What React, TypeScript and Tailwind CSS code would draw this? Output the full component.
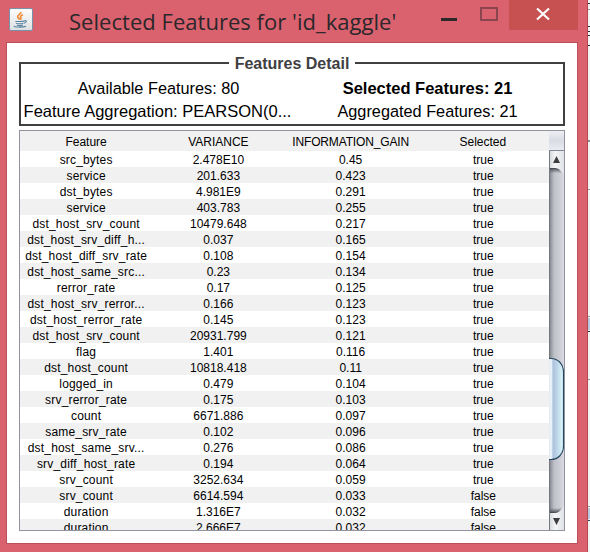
import React from "react";

type Row = [string, string, string, string];

const rows: Row[] = [
  ["src_bytes", "2.478E10", "0.45", "true"],
  ["service", "201.633", "0.423", "true"],
  ["dst_bytes", "4.981E9", "0.291", "true"],
  ["service", "403.783", "0.255", "true"],
  ["dst_host_srv_count", "10479.648", "0.217", "true"],
  ["dst_host_srv_diff_h...", "0.037", "0.165", "true"],
  ["dst_host_diff_srv_rate", "0.108", "0.154", "true"],
  ["dst_host_same_src...", "0.23", "0.134", "true"],
  ["rerror_rate", "0.17", "0.125", "true"],
  ["dst_host_srv_rerror...", "0.166", "0.123", "true"],
  ["dst_host_rerror_rate", "0.145", "0.123", "true"],
  ["dst_host_srv_count", "20931.799", "0.121", "true"],
  ["flag", "1.401", "0.116", "true"],
  ["dst_host_count", "10818.418", "0.11", "true"],
  ["logged_in", "0.479", "0.104", "true"],
  ["srv_rerror_rate", "0.175", "0.103", "true"],
  ["count", "6671.886", "0.097", "true"],
  ["same_srv_rate", "0.102", "0.096", "true"],
  ["dst_host_same_srv...", "0.276", "0.086", "true"],
  ["srv_diff_host_rate", "0.194", "0.064", "true"],
  ["srv_count", "3252.634", "0.059", "true"],
  ["srv_count", "6614.594", "0.033", "false"],
  ["duration", "1.316E7", "0.032", "false"],
  ["duration", "2.666E7", "0.032", "false"],
];

function JavaIcon() {
  return (
    <svg className="block h-6 w-6" viewBox="0 0 24 24" fill="none">
      <defs>
        <linearGradient id="tile" x1="0" y1="0" x2="0" y2="1">
          <stop offset="0" stopColor="#fdfdfd" />
          <stop offset="1" stopColor="#dde0e2" />
        </linearGradient>
      </defs>
      <rect x="0.5" y="0.5" width="23" height="22" rx="1.5" fill="url(#tile)" stroke="#7892a9" />
      <path d="M12 4c.5 2-4 3-3.300 5.200.3 1 1.600 1.500 1.900 2.500M14 6.800c-2 .8-3 1.600-2.300 2.700.5.9.5 1.500-.3 2.100" stroke="#ef8b35" strokeWidth="1.700" />
      <path d="M6.500 13c0 .8 7.500.7 9 0M15.500 12.700c2.500-.5 2.500 1.800-.5 2.500M7.200 15c0 1 5.500 1 7.200.2M7.800 17c.8.900 4.500.8 6 0M5.500 18c-2.500 1.300 9 1.500 11.500.2" stroke="#56819f" strokeWidth="1.100" />
    </svg>
  );
}

function ScrollBar() {
  return (
    <svg className="block h-[380px] w-[15px]" viewBox="0 0 15 380">
      <defs>
        <linearGradient id="track">
          <stop offset="0" stopColor="#777980" />
          <stop offset="0.14" stopColor="#999ba3" />
          <stop offset="0.35" stopColor="#bfc1c8" />
          <stop offset="0.7" stopColor="#cccdd5" />
          <stop offset="1" stopColor="#d8d9e1" />
        </linearGradient>
        <linearGradient id="button">
          <stop offset="0" stopColor="#d1d3d6" />
          <stop offset="0.4" stopColor="#f4f5f5" />
          <stop offset="1" stopColor="#dfe2e7" />
        </linearGradient>
        <linearGradient id="thumb">
          <stop offset="0" stopColor="#e1ebf5" />
          <stop offset="0.16" stopColor="#eef4fa" />
          <stop offset="0.28" stopColor="#adc3dc" />
          <stop offset="0.5" stopColor="#b9d0e5" />
          <stop offset="1" stopColor="#e0fbff" />
        </linearGradient>
        <linearGradient id="shadeTop" x1="0" y1="0" x2="0" y2="1">
          <stop offset="0" stopColor="#303238" stopOpacity="0.9" />
          <stop offset="1" stopColor="#777980" stopOpacity="0" />
        </linearGradient>
        <linearGradient id="shadeBottom" x1="0" y1="1" x2="0" y2="0">
          <stop offset="0" stopColor="#303238" stopOpacity="0.9" />
          <stop offset="1" stopColor="#777980" stopOpacity="0" />
        </linearGradient>
      </defs>
      <rect width="15" height="380" fill="url(#track)" />
      <path d="M0 17H7C10 17 12 20 13 23C9 21 4 21 0 23Z" fill="url(#shadeTop)" />
      <path d="M0 0H15V26C14 21 11 17 6 17H0Z" fill="url(#button)" />
      <path d="M0 362H7C10 362 12 359 13 356C9 358 4 358 0 356Z" fill="url(#shadeBottom)" />
      <path d="M0 380H15V353C14 358 11 362 6 362H0Z" fill="url(#button)" />
      <path d="M7.500 5L11 12H4Z M4 367H11L7.500 374Z" fill="#3b3e40" />
      <path d="M0 207.500H2C9 207.500 14.500 213 14.500 221V295C14.500 303 9 308.500 2 308.500H0Z" fill="url(#thumb)" />
      <path d="M0 207.500H2C9 207.500 14.500 213 14.500 221V295C14.500 303 9 308.500 2 308.500H0" fill="none" stroke="#294960" strokeWidth="1.200" />
      <path d="M.5 0V207M.5 309V380" stroke="#777980" />
    </svg>
  );
}

function TitleBar() {
  return (
    <header className="flex h-[42px] items-start">
      <div className="ml-[9px] mt-2">
        <JavaIcon />
      </div>
      <h1 className="ml-9 mt-[5px] h-8 w-[337px] whitespace-nowrap font-['Open_Sans',sans-serif] text-[22px] leading-8 tracking-[0.03px] text-[#2b272a]">
        Selected Features for 'id_kaggle'
      </h1>
      <svg className="ml-[35px] h-[30px] w-[68px]" viewBox="0 0 68 30" fill="none">
        <rect y="18" width="16" height="3" fill="#2b282a" />
        <rect x="40" y="8" width="16" height="12" stroke="#8b454e" strokeWidth="2" />
      </svg>
      <div className="h-[30px] w-[69px] bg-[#c75050]">
        <svg className="h-[30px] w-[69px]" viewBox="0 0 69 30">
          <path d="M28 8.500L40 19.500M40 8.500L28 19.500" stroke="white" strokeWidth="2.200" />
        </svg>
      </div>
    </header>
  );
}

export default function App() {
  return (
    <div className="flex h-[552px] w-[590px] overflow-hidden bg-[#f4f4f5] font-['Liberation_Sans',Arial,sans-serif] text-black">
      <div className="h-[552px] w-[588px] shrink-0 border-r border-[#b44853] bg-[#da626f]">
        <TitleBar />
        <main className="ml-1.5 h-[502px] w-[572px] border border-[#bd4f5a] bg-white px-3 pt-[19px]">
          <section className="flex h-16 w-[546px] flex-col border-2 border-[#404042]">
            <h2 className="-mt-[10px] h-[19px] w-[126px] shrink-0 self-center bg-white text-center text-base font-bold leading-[19px] text-[#404042]">
              Features Detail
            </h2>
            <div className="mt-1 grid grid-cols-2 whitespace-nowrap text-center text-[16.300px] leading-[23px]">
              <span className="pl-1">Available Features: 80</span>
              <b className="text-[16.500px] leading-[23px]">Selected Features: 21</b>
              <span className="pl-0.5 text-[16.500px] leading-[23px]">Feature Aggregation: PEARSON(0...</span>
              <span>Aggregated Features: 21</span>
            </div>
          </section>
          <section className="mt-1 flex h-[401px] w-[546px] overflow-hidden border border-[#9293a1]">
            <div className="w-[529px] shrink-0 text-center text-xs">
              <div className="grid h-5 grid-cols-4 bg-[#f1f1f1] leading-[22px]">
                <span>Feature</span>
                <span>VARIANCE</span>
                <span className="tracking-[-0.15px]">INFORMATION_GAIN</span>
                <span>Selected</span>
              </div>
              {rows.map((row, i) => (
                <div key={i} className="grid h-4 grid-cols-4 whitespace-nowrap leading-[18px] even:bg-white odd:bg-[#f1f1f1]">
                  {row.map((value, j) => (
                    <span key={j} className={j === 0 ? "tracking-[0.18px]" : j === 3 ? "pl-px" : ""}>{value}</span>
                  ))}
                </div>
              ))}
            </div>
            <div className="w-[15px]">
              <div className="h-5 border-b border-[#858997] bg-linear-to-b from-[#eeeff3] via-[#d9dce4] to-[#e8ebef]" />
              <ScrollBar />
            </div>
          </section>
        </main>
      </div>
      <svg className="h-[552px] w-[2px] shrink-0" viewBox="0 0 2 552">
        <path d="M0 3.500H2M0 26.500H2M0 31.500H2M0 35.500H2M0 45.500H2M0 141H2M0 331.500H2" stroke="#292b32" />
        <path d="M0 9.500H2M0 189.500H2M0 316.500H2M0 379.500H2M0 506.500H2" stroke="#9699a0" />
        <path d="M0 318H2V330H0ZM0 508H2V519H0Z" fill="#b6cbdf" />
        <path d="M0 520.500H2" stroke="#294960" />
      </svg>
    </div>
  );
}
